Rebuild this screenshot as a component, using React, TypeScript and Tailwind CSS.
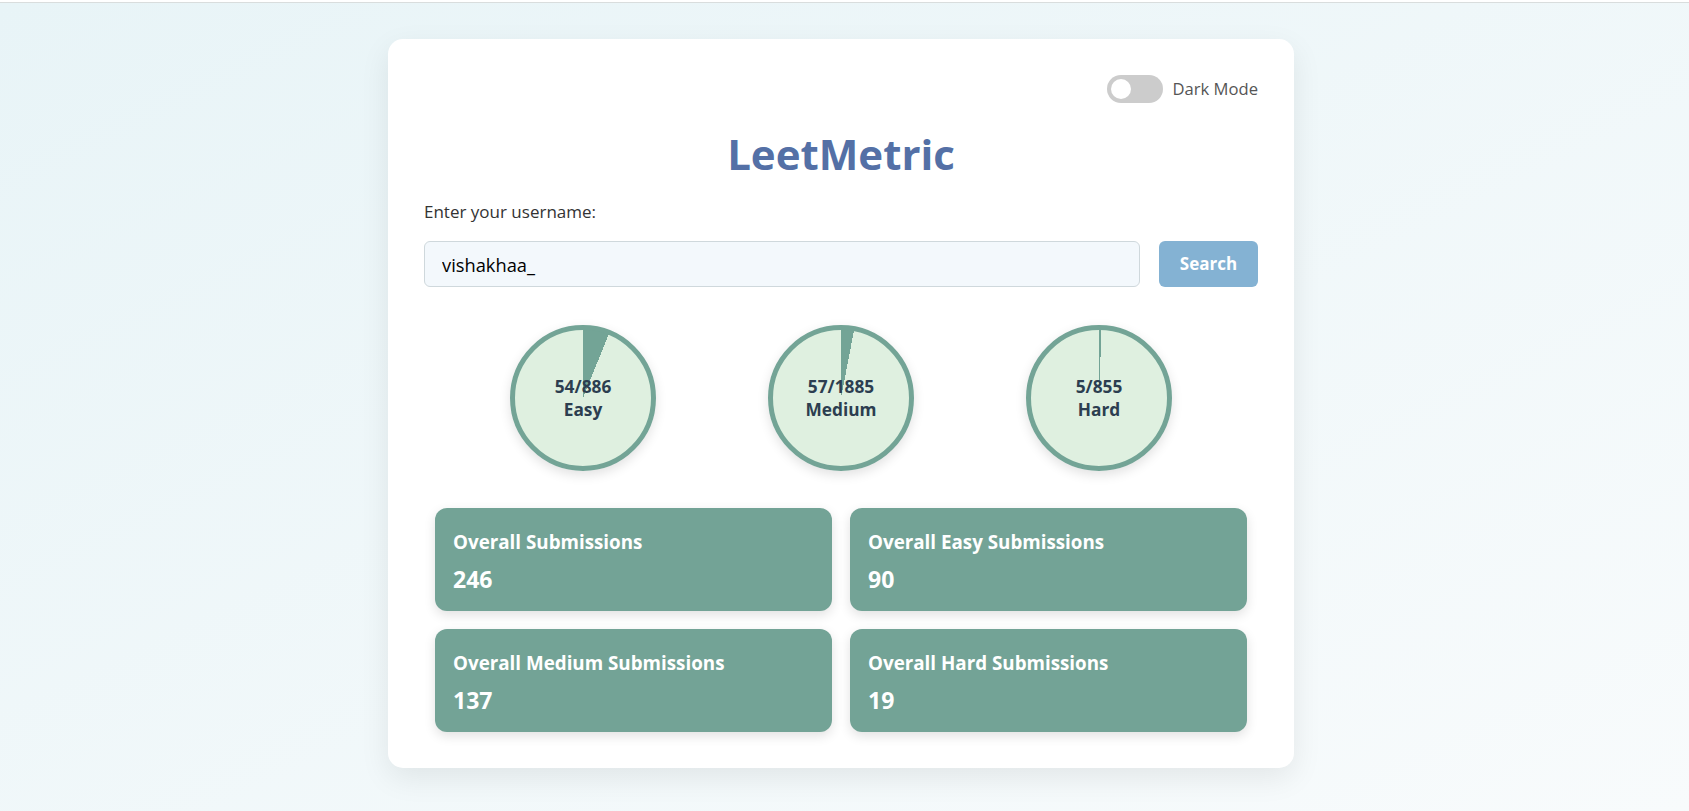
import React from "react";

const font = { fontFamily: '"Segoe UI", "Open Sans", sans-serif' };

type Level = { label: string; solved: number; total: number };

const levels: Level[] = [
  { label: "Easy", solved: 54, total: 886 },
  { label: "Medium", solved: 57, total: 1885 },
  { label: "Hard", solved: 5, total: 855 },
];

const stats = [
  { title: "Overall Submissions", value: 246 },
  { title: "Overall Easy Submissions", value: 90 },
  { title: "Overall Medium Submissions", value: 137 },
  { title: "Overall Hard Submissions", value: 19 },
];

function ProgressCircle({ level }: { level: Level }) {
  const deg = (level.solved / level.total) * 360;
  return (
    <div
      className="w-[146px] h-[146px] rounded-full border-[5px] border-[#73a496] flex flex-col items-center justify-center shadow-[0_4px_12px_rgba(0,0,0,0.12)]"
      style={{
        background: `conic-gradient(#73a496 ${deg}deg, #dff0e0 0deg)`,
      }}
    >
      <span className="text-[17.3px] font-bold leading-[23px] text-[#2c3e50]">
        {level.solved}/{level.total}
      </span>
      <span className="text-[17.3px] font-bold leading-[23px] text-[#2c3e50]">
        {level.label}
      </span>
    </div>
  );
}

export default function App() {
  return (
    <div
      className="min-h-screen bg-gradient-to-br from-[#e8f4f7] to-[#f8fbfc]"
      style={font}
    >
      <div className="h-[3px] bg-white border-b border-[#d9dddd]" />
      <div className="pt-[36px] pb-10">
        <div className="w-[906px] ml-[388px] bg-white rounded-[15px] shadow-[0_10px_30px_rgba(0,0,0,0.08)] p-[36px]">
          {/* Dark mode toggle */}
          <div className="flex justify-end items-center gap-[10px]">
            <div className="w-[56px] h-[28px] rounded-full bg-[#cccccc] flex items-center px-[4px]">
              <div className="w-[20px] h-[20px] rounded-full bg-white" />
            </div>
            <span className="text-[16.6px] leading-[28px] text-[#555555]">
              Dark Mode
            </span>
          </div>

          <h1 className="mt-[21px] text-center text-[42px] font-bold leading-[60px] text-[#5470a6]">
            LeetMetric
          </h1>

          <label className="block mt-[16px] text-[17px] leading-[24px] text-[#333333]">
            Enter your username:
          </label>

          <div className="mt-[17px] flex gap-[19px]">
            <input
              className="flex-1 h-[46px] rounded-[6px] border border-[#cfd8dc] bg-[#f3f8fc] px-[17px] text-[18.3px] text-black outline-none"
              defaultValue="vishakhaa_"
              style={font}
            />
            <button className="w-[99px] h-[46px] rounded-[6px] bg-[#84b2d3] text-white text-[17px] font-bold">
              Search
            </button>
          </div>

          <div className="mt-[38px] flex justify-center gap-[112px]">
            {levels.map((l) => (
              <ProgressCircle key={l.label} level={l} />
            ))}
          </div>

          <div className="mt-[37px] mx-[11px] grid grid-cols-2 gap-[18px]">
            {stats.map((s) => (
              <div
                key={s.title}
                className="h-[103px] rounded-[12px] bg-[#73a396] px-[18px] pt-[21px] shadow-[0_4px_12px_rgba(0,0,0,0.12)] text-white"
              >
                <div className="text-[18.8px] font-bold leading-[26px]">
                  {s.title}
                </div>
                <div className="mt-[10px] text-[23px] font-bold leading-[28px]">
                  {s.value}
                </div>
              </div>
            ))}
          </div>
        </div>
      </div>
    </div>
  );
}
